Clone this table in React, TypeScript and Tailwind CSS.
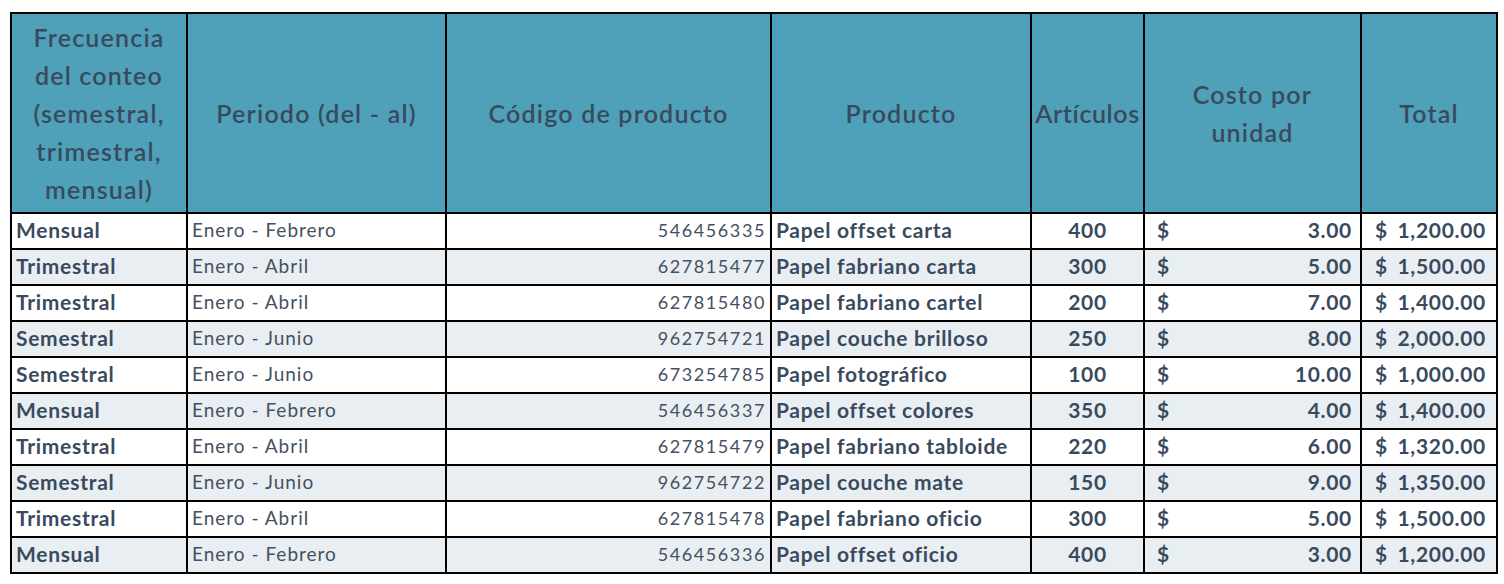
const rows = [
  ["Mensual", "Enero - Febrero", "546456335", "Papel offset carta", "400", "3.00", "1,200.00"],
  ["Trimestral", "Enero - Abril", "627815477", "Papel fabriano carta", "300", "5.00", "1,500.00"],
  ["Trimestral", "Enero - Abril", "627815480", "Papel fabriano cartel", "200", "7.00", "1,400.00"],
  ["Semestral", "Enero - Junio", "962754721", "Papel couche brilloso", "250", "8.00", "2,000.00"],
  ["Semestral", "Enero - Junio", "673254785", "Papel fotográfico", "100", "10.00", "1,000.00"],
  ["Mensual", "Enero - Febrero", "546456337", "Papel offset colores", "350", "4.00", "1,400.00"],
  ["Trimestral", "Enero - Abril", "627815479", "Papel fabriano tabloide", "220", "6.00", "1,320.00"],
  ["Semestral", "Enero - Junio", "962754722", "Papel couche mate", "150", "9.00", "1,350.00"],
  ["Trimestral", "Enero - Abril", "627815478", "Papel fabriano oficio", "300", "5.00", "1,500.00"],
  ["Mensual", "Enero - Febrero", "546456336", "Papel offset oficio", "400", "3.00", "1,200.00"],
];

const th = "border-2 border-black bg-[#4fa0b9] p-0 text-center align-middle font-semibold";
const td = "border-2 border-black h-[36px] p-0 pb-[3px] align-middle leading-[26px]";
const bold = "text-[21px] font-bold tracking-[0.7px]";

export default function App() {
  return (
    <div className="min-h-screen bg-white pl-[10px] pt-[12px] font-['Lato',sans-serif] text-[#3a4a5e]">
      <table className="w-[1486px] table-fixed border-collapse">
        <colgroup>
          <col className="w-[176px]" />
          <col className="w-[259px]" />
          <col className="w-[325px]" />
          <col className="w-[260px]" />
          <col className="w-[113px]" />
          <col className="w-[217px]" />
          <col className="w-[136px]" />
        </colgroup>
        <thead>
          <tr className="h-[200px] text-[25px] leading-[38px] tracking-[1.2px]">
            <th className={th}>
              Frecuencia
              <br />
              del conteo
              <br />
              (semestral,
              <br />
              trimestral,
              <br />
              mensual)
            </th>
            <th className={th}>Periodo (del - al)</th>
            <th className={th}>Código de producto</th>
            <th className={th}>Producto</th>
            <th className={`${th} whitespace-nowrap tracking-[0.6px]`}>Artículos</th>
            <th className={th}>
              Costo por
              <br />
              unidad
            </th>
            <th className={th}>Total</th>
          </tr>
        </thead>
        <tbody>
          {rows.map((r, i) => (
            <tr key={i} className={i % 2 === 1 ? "bg-[#e9eef3]" : "bg-white"}>
              <td className={`${td} pl-[4px] ${bold}`}>{r[0]}</td>
              <td className={`${td} pl-[4px] text-[19px] font-normal tracking-[1px] text-[#455060]`}>{r[1]}</td>
              <td className={`${td} pr-[4px] text-right text-[18px] font-normal tracking-[1.6px] text-[#455060]`}>
                {r[2]}
              </td>
              <td className={`${td} pl-[4px] whitespace-nowrap ${bold}`}>{r[3]}</td>
              <td className={`${td} text-center ${bold}`}>{r[4]}</td>
              <td className={`${td} pl-[12px] pr-[8px] ${bold}`}>
                <div className="flex justify-between">
                  <span>$</span>
                  <span>{r[5]}</span>
                </div>
              </td>
              <td className={`${td} pl-[13px] pr-[10px] ${bold}`}>
                <div className="flex justify-between">
                  <span>$</span>
                  <span>{r[6]}</span>
                </div>
              </td>
            </tr>
          ))}
        </tbody>
      </table>
    </div>
  );
}
